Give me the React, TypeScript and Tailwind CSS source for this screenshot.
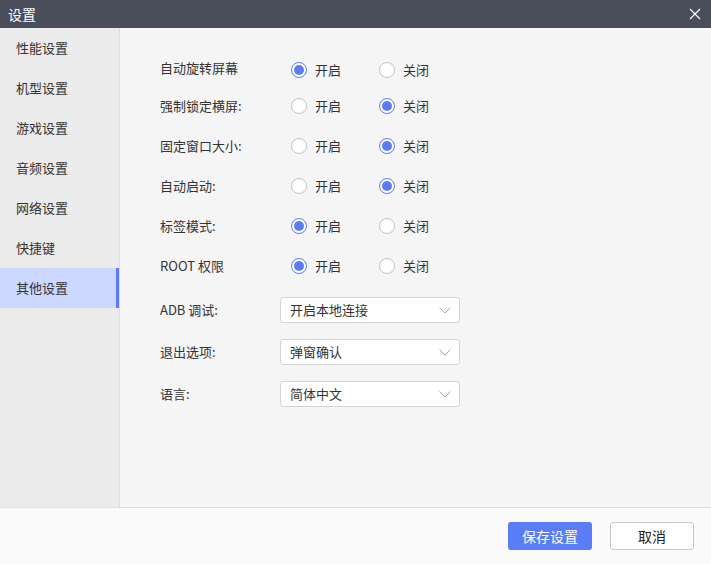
import { useState } from 'react'

const navItems = ['性能设置', '机型设置', '游戏设置', '音频设置', '网络设置', '快捷键', '其他设置']

const radioRows: { label: string; on: boolean }[] = [
  { label: '自动旋转屏幕', on: true },
  { label: '强制锁定横屏:', on: false },
  { label: '固定窗口大小:', on: false },
  { label: '自动启动:', on: false },
  { label: '标签模式:', on: true },
  { label: 'ROOT 权限', on: true },
]

const selectRows = [
  { label: 'ADB 调试:', value: '开启本地连接' },
  { label: '退出选项:', value: '弹窗确认' },
  { label: '语言:', value: '简体中文' },
]

function Radio({ checked, label, onClick }: { checked: boolean; label: string; onClick: () => void }) {
  return (
    <button type="button" onClick={onClick} className="flex items-center gap-[8px] w-[88px]">
      <span
        className={
          checked
            ? 'flex h-4 w-4 items-center justify-center rounded-full border border-[#5b7cf5] bg-white'
            : 'flex h-4 w-4 items-center justify-center rounded-full border border-[#c4c4c4] bg-white'
        }
      >
        {checked && <span className="h-[10px] w-[10px] rounded-full bg-[#5b7cf5]" />}
      </span>
      <span>{label}</span>
    </button>
  )
}

export default function App() {
  const [active, setActive] = useState(6)
  const [values, setValues] = useState(radioRows.map((r) => r.on))

  return (
    <div
      className="flex h-[564px] w-[711px] flex-col bg-[#f5f5f5] text-[13px] text-[#333]"
      style={{ fontFamily: '"Noto Sans CJK SC", "Noto Sans", sans-serif' }}
    >
      <header className="flex h-[28px] shrink-0 items-center justify-between bg-[#4a4e5b] pl-2 pr-[10px] text-white">
        <span className="text-[14px]">设置</span>
        <svg width="12" height="12" viewBox="0 0 12 12" fill="none" stroke="#fff" strokeWidth="1.1">
          <path d="M1 1l10 10M11 1L1 11" />
        </svg>
      </header>

      <div className="flex min-h-0 flex-1">
        <aside className="w-[120px] shrink-0 border-r border-[#dcdcdc] bg-[#ebebeb]">
          {navItems.map((item, i) => (
            <button
              key={item}
              type="button"
              onClick={() => setActive(i)}
              className={
                i === active
                  ? 'flex h-10 w-full items-center border-r-[3px] border-[#5b7cf5] bg-[#ccd8ff] pl-4 text-left'
                  : 'flex h-10 w-full items-center pl-4 text-left'
              }
            >
              {item}
            </button>
          ))}
        </aside>

        <main className="flex-1 pl-10 pt-[25px]">
          {radioRows.map((row, i) => (
            <div key={row.label} className={i === 0 ? 'flex h-[33px] items-center' : 'flex h-10 items-center'}>
              <span className={i === 0 ? 'w-[120px] -mt-[4px]' : 'w-[120px]'}>{row.label}</span>
              <div className="flex pl-[11px]">
                <Radio
                  checked={values[i]}
                  label="开启"
                  onClick={() => setValues((v) => v.map((x, j) => (j === i ? true : x)))}
                />
                <Radio
                  checked={!values[i]}
                  label="关闭"
                  onClick={() => setValues((v) => v.map((x, j) => (j === i ? false : x)))}
                />
              </div>
            </div>
          ))}

          <div className="mt-[3px]">
            {selectRows.map((row) => (
              <div key={row.label} className="flex h-[42px] items-center">
                <span className="w-[120px]">{row.label}</span>
                <div className="flex h-[26px] w-[180px] items-center justify-between rounded-[3px] border border-[#d4d4d4] bg-white pl-[9px] pr-[8px]">
                  <span>{row.value}</span>
                  <svg width="12" height="7" viewBox="0 0 12 7" fill="none" stroke="#a8a8a8" strokeWidth="1">
                    <path d="M0.5 0.5L6 6l5.5-5.5" />
                  </svg>
                </div>
              </div>
            ))}
          </div>
        </main>
      </div>

      <footer className="flex h-[57px] shrink-0 items-center justify-end gap-[18px] border-t border-[#dedede] bg-[#fafafa] pr-[17px]">
        <button type="button" className="h-[28px] w-[84px] rounded-[3px] bg-[#5b7cf7] text-[14px] text-white">
          保存设置
        </button>
        <button
          type="button"
          className="h-[28px] w-[84px] rounded-[3px] border border-[#c8c8c8] bg-white text-[14px] text-[#222]"
        >
          取消
        </button>
      </footer>
    </div>
  )
}
